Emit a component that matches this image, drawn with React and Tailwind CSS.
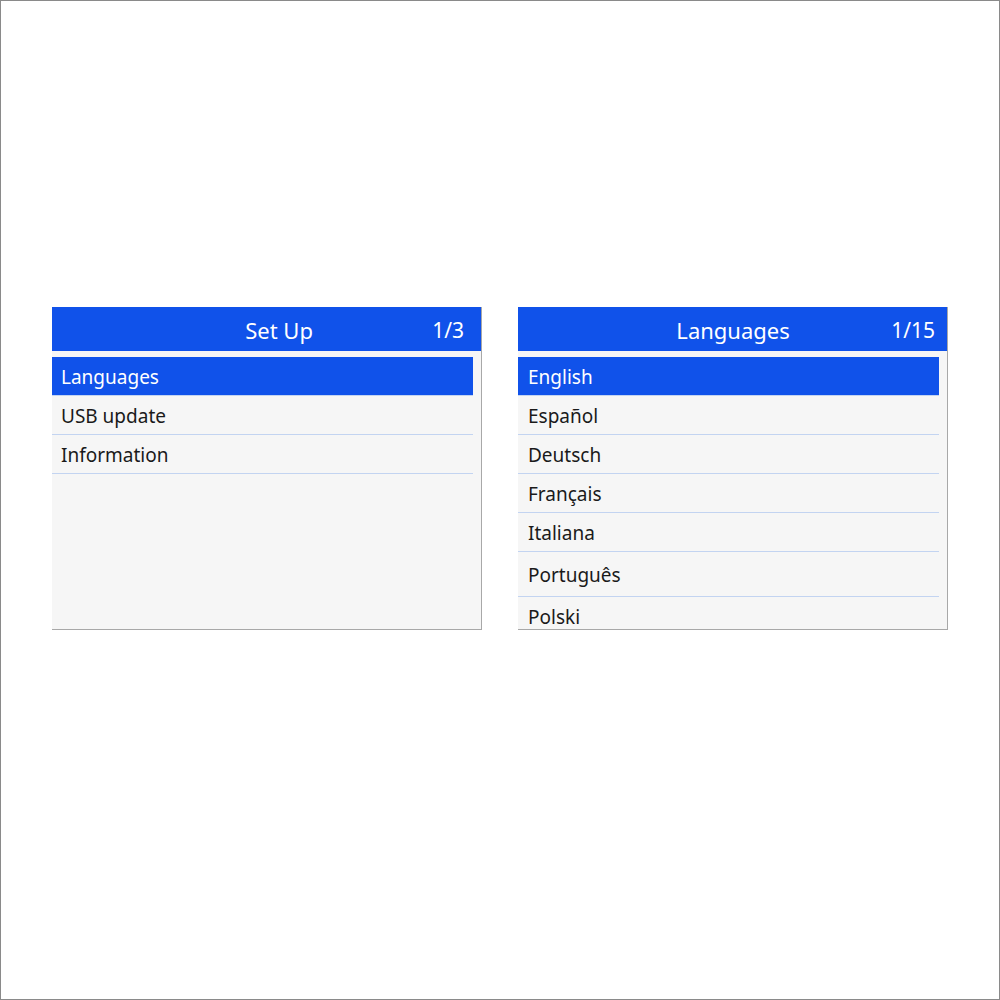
import React from 'react';

const setupItems = ['Languages', 'USB update', 'Information'];
const languages = ['English', 'Español', 'Deutsch', 'Français', 'Italiana', 'Português', 'Polski'];

function MenuPanel({ title, page, items, selected, titleClass, pageClass, rowPad, tallRow }) {
  return (
    <div className="w-[430px] h-[323px] bg-[#f6f6f6] border-r border-b border-[#a8a8a8] flex flex-col overflow-hidden">
      <div className="h-[44px] shrink-0 bg-[#1052ea] text-white flex items-center pt-[3px]">
        <span className={`flex-1 text-center text-[22px] ${titleClass || ''}`}>{title}</span>
        <span className={`text-[21px] ${pageClass || ''}`}>{page}</span>
      </div>
      <div className="pt-[6px] pr-[8px] flex flex-col">
        {items.map((item, index) => (
          <div
            key={index}
            className={`${index === tallRow ? 'h-[45px]' : 'h-[39px]'} shrink-0 flex items-center ${rowPad || 'pl-[9px]'} pt-[3px] text-[19px] border-b border-[#c3d4f1] ${
              index === selected ? 'bg-[#1052ea] text-white' : 'text-[#1a1a1a]'
            }`}
          >
            {item}
          </div>
        ))}
      </div>
    </div>
  );
}

export default function App() {
  return (
    <div
      className="w-[1000px] h-[1000px] bg-white border border-[#8a8a8a] flex justify-center items-start gap-[36px] pt-[306px]"
      style={{ fontFamily: '"Noto Sans", "Open Sans", sans-serif' }}
    >
      <MenuPanel
        title="Set Up"
        page="1/3"
        items={setupItems}
        selected={0}
        titleClass="pl-[74px]"
        pageClass="pr-[17px]"
      />
      <MenuPanel
        title="Languages"
        page="1/15"
        items={languages}
        selected={0}
        titleClass="pl-[57px]"
        pageClass="pr-[12px]"
        rowPad="pl-[10px]"
        tallRow={5}
      />
    </div>
  );
}
